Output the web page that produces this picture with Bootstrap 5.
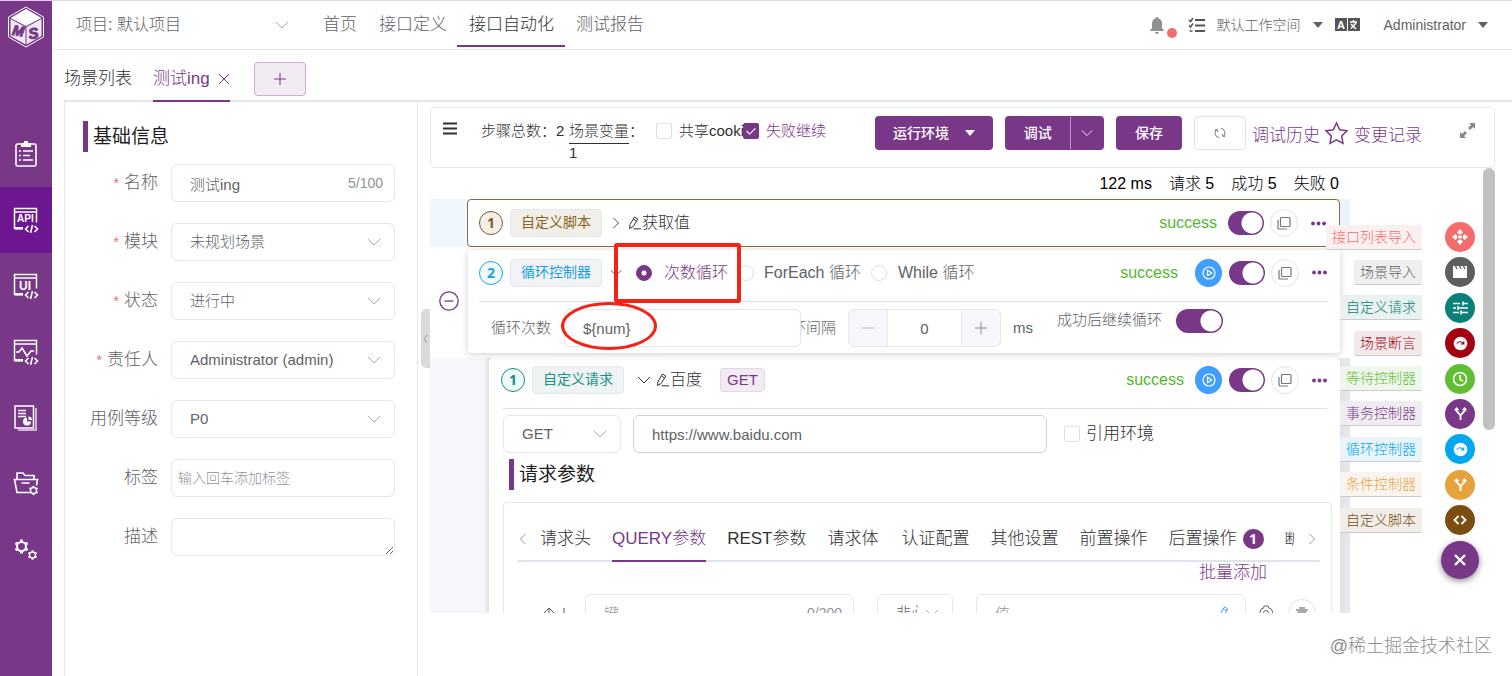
<!DOCTYPE html>
<html lang="zh-CN">
<head>
<meta charset="utf-8">
<meta name="viewport" content="width=device-width, initial-scale=1">
<title>接口自动化</title>
<link href="https://cdn.jsdelivr.net/npm/bootstrap@5.3.0/dist/css/bootstrap.min.css" rel="stylesheet">
<style>
:root{--ms:#783887;--line:#e4e7ed;--txt:#606266}
body{font-family:"Liberation Sans","Noto Sans CJK SC",sans-serif;font-weight:300;font-size:16px;line-height:24px;color:#303133;background:#fff;overflow-x:hidden}
button{font-weight:300}
svg{display:block;flex:none}
a{color:var(--ms);text-decoration:none}
.fs-17{font-size:17px}
.c-ms{color:var(--ms)}
.c-grey{color:var(--txt)}
.plain{background:none;border:0;padding:0;color:inherit}
/* side bar */
.side{width:52px;min-height:100vh;background:var(--ms);border-top:1px solid #e6c7ee}
.side .brand{height:120px;padding-top:5px}
.side a{height:66px;color:#fff}
.side a.active{background:#6c1690}
/* header */
.top{height:50px;border-top:1px solid #d9d9d9;border-bottom:1px solid #e6e6e6;color:var(--txt)}
.top .menu{gap:22px;margin-left:30px}
.top .menu a{color:var(--txt);height:46px;line-height:47px;position:relative}
.top .menu a.active{color:#303133}
.top .menu a.active::after{content:"";position:absolute;left:-12px;right:-11px;bottom:0;height:2px;background:var(--ms)}
.form-select.project{width:226px;border:0;color:var(--txt);padding:0 9px;background-position:right 4px top 8px;height:30px;line-height:30px;margin:9px 0 0 15px;font-size:16px}
.top-tools{height:47px}
.small-text{font-size:14px}
.caret{width:0;height:0;border:5px solid transparent;border-top:6px solid currentColor;border-bottom:0}
.dot{width:10px;height:10px;border-radius:50%;background:#f56c6c}
/* tabs of scenes */
.scenes{height:52px;margin-left:12px;border-bottom:2px solid #dfe4ed}
.scenes .tab-item{height:52px;line-height:24px;padding-top:7px;border-bottom:2px solid transparent}
.scenes .tab-item.active{color:var(--ms);border-color:var(--ms);margin-left:21px}
.add{width:52px;height:34px;border:1px solid #c9b0cf;border-radius:4px;background:#f2ebf3;color:var(--ms);place-items:center;margin:12px 0 0 24px;padding:0}
/* form */
.info{width:354px;margin-left:12px;border:1px solid var(--line);border-width:0 1px;padding:19px 22px 0 18px;min-height:calc(100vh - 102px)}
.headline{border-left:5px solid var(--ms);padding-left:5px;font-size:19px;font-weight:400;line-height:31px;color:#1d1d1f}
.info .headline{margin-bottom:12px}
.info .line{height:38px;margin-bottom:21px}
.info .line label{width:75px;text-align:right;margin-right:13px;color:var(--txt);font-size:17px;flex:none}
.req::before{content:"*";color:#f56c6c;font-size:14px;margin-right:5px}
.form-control,.form-select{font-weight:300;font-size:15px;line-height:24px;height:38px;border-color:#e4e7ed;color:var(--txt);padding:6px 18px}
.form-select{background-image:url("data:image/svg+xml,%3Csvg xmlns='http://www.w3.org/2000/svg' viewBox='0 0 14 14' fill='none' stroke='%23a8abb2' stroke-width='1'%3E%3Cpath d='M1 4l6 6 6-6'/%3E%3C/svg%3E");background-size:14px;background-position:right 13px center}
.form-control::placeholder{color:#909399}
.label-input{font-size:14px;padding:6px}
.count{position:absolute;right:12px;top:8px;font-size:14px;line-height:22px;color:#909399}
/* tool bar */
.bar{height:61px;margin:5px 17px 0 0;border:1px solid var(--line);border-radius:5px;padding:8px 18px 0 12px}
.bar .btn{height:34px;padding:0;font-size:14px;border-radius:4px}
.bar .btn-group .btn:first-child{border-radius:4px 0 0 4px}
.bar .btn-group .btn:last-child{border-radius:0 4px 4px 0}
.btn-ms{background:var(--ms);color:#fff;font-weight:500}
.btn-ms:hover{background:#8a4c98;color:#fff}
.form-check-input{border-color:#dcdfe6;margin:0;width:16px;height:16px;flex:none}
.form-check-input[type=checkbox]{border-radius:2px}
.form-check-input:checked{background-color:var(--ms);border-color:var(--ms)}
.form-check-input:checked[type=checkbox]{background-image:url("data:image/svg+xml,%3Csvg xmlns='http://www.w3.org/2000/svg' viewBox='0 0 16 16' fill='none' stroke='%23fff' stroke-width='1.3'%3E%3Cpath d='M3 8l3.500 3.500L13 5'/%3E%3C/svg%3E")}
.form-check-input:checked[type=radio]{background-image:radial-gradient(circle,#fff 2px,transparent 3px)}
.form-switch-ms{width:36px;height:24px;border-radius:12px;appearance:none;background:radial-gradient(circle at calc(100% - 12px) 50%,#fff 10px,var(--ms) 11px);flex:none;margin:0}
.form-switch-ms.wide{width:47px}
/* step tree */
.tree{height:calc(100vh - 262px);overflow:hidden;width:920px;background:#eef0f3}
.step{background:#fff;border-radius:4px}
.step-head{height:46px;padding-right:13px}
.row-a{background:linear-gradient(90deg,#f0f7ff,#eaf4ff);padding:0 10px 0 37px}
.row-a .step{border:1px solid #8a6b45;padding-left:11px}
.row-b{background:#fff;padding:3px 10px 5px 38px;position:relative}
.row-b .step{box-shadow:0 1px 7px #0003;padding-left:11px;height:103px}
.row-c{background:linear-gradient(90deg,#f5f7fb 54px,#e6e8eb 59px);padding:0 10px 0 59px}
.row-c .step{box-shadow:0 0 8px #0001;padding:0 8px 0 14px}
.num{width:24px;height:24px;border:1px solid;border-radius:50%;font:bold 14px/22px "Noto Sans",sans-serif;text-align:center;flex:none}
.tagbox{height:28px;padding:0 10px;font-size:14px;line-height:25px;border:1px solid #e4e7ed;border-radius:4px;background:#f2f3f5;margin-left:7px;flex:none;font-weight:400}
.ok{color:#52b82e;margin-right:11px}
.round{width:28px;height:28px;border-radius:50%;border:1px solid #e4e4e8;background:#fff;color:#777;display:grid;place-items:center;padding:0;flex:none}
.round.play{background:#409eff;border-color:#409eff;color:#fff;width:27px;margin-right:7px}
.round.copy{margin:0 13px 0 6px}
.rule{border-top:1px solid #dcdfe6;margin-right:13px}
.fold{position:absolute;left:9px;top:44px;width:20px;height:20px}
.mark-box{position:absolute;left:184px;top:-4px;width:127px;height:60px;border:4px solid #f52216;border-radius:3px}
.mark-oval{position:absolute;left:131px;top:55px;width:96px;height:48px;border:3px solid #f52216;border-radius:50%}
.stepper{width:153px;height:38px}
.stepper .btn{background:#f5f7fa;border:1px solid var(--line);width:40px;padding:0;color:#8a8d93;display:grid;place-items:center}
.inner{border:1px solid var(--line);border-radius:4px;padding:13px 11px 0 13px;height:180px}
.subtabs{gap:21px;border-bottom:2px solid #dfe4ed;font-size:17px;white-space:nowrap;height:46px}
.subtabs .plain{height:46px;line-height:46px;flex:none}
.subtabs .plain.active{color:var(--ms);border-bottom:2px solid var(--ms)}
.cnt{width:21px;height:20px;border-radius:10px;background:var(--ms);color:#fff;font:bold 14px/20px "Noto Sans",sans-serif;text-align:center;margin-left:6px}
.scroll{width:12px;height:262px;background:#c1c1c1;border-radius:6px;position:absolute;right:17px;top:66px}
/* quick actions over the tree */
.quick{position:absolute;right:33px;top:120px}
.quick ul{height:313px;margin:0 4px 6px 0;padding:0;list-style:none}
.quick li{gap:23px;height:30px;color:var(--c)}
.quick li span{font-size:14px;line-height:24px;height:25px;padding:0 6px;background:color-mix(in srgb,var(--c) 7%,#fafafa);border-bottom:1px solid #ccc;border-radius:2px;font-weight:300}
.quick li button{width:30px;height:30px;border:0;border-radius:50%;background:var(--c);color:#fff;padding:0;display:grid;place-items:center}
.close-all{width:38px;height:38px;border:0;border-radius:50%;background:var(--ms);color:#fff;display:grid;place-items:center;padding:0;box-shadow:0 2px 6px #0007}
.grip{position:absolute;left:-9px;top:207px;width:9px;height:59px;background:#d8dade;border-radius:5px 0 0 5px}
.stamp{position:absolute;right:20px;bottom:18px;font-size:18px;color:#8c8c8c;text-shadow:1px 1px 0 #fff}
.shrink{overflow:hidden;white-space:nowrap}
</style>
</head>
<body>
<svg width="0" height="0" class="position-absolute">
<defs>
<symbol id="down" viewBox="0 0 14 14"><path d="M1 4l6 6 6-6" fill="none" stroke="currentColor"/></symbol>
<symbol id="right" viewBox="0 0 14 14"><path d="M4 1l6 6-6 6" fill="none" stroke="currentColor"/></symbol>
<symbol id="left" viewBox="0 0 14 14"><path d="M10 1L4 7l6 6" fill="none" stroke="currentColor"/></symbol>
<symbol id="pen" viewBox="0 0 14 14"><path d="M1.500 12.500L2 8.500 6.500 1l3.300 2-4.600 7.500zM5.300 3l3.300 2M5.500 12.800H13" fill="none" stroke="currentColor"/></symbol>
<symbol id="copy" viewBox="0 0 14 14"><path d="M4.500 1.500h7.500a1 1 0 011 1v7a1 1 0 01-1 1H4.500a1 1 0 01-1-1v-7a1 1 0 011-1zM1 4v8a1 1 0 001 1h8" fill="none" stroke="currentColor" stroke-width="1.200"/></symbol>
<symbol id="play" viewBox="0 0 14 14"><circle cx="7" cy="7" r="6" fill="none" stroke="currentColor" stroke-width="1.200"/><path d="M5.500 4.300v5.400L9.800 7z" fill="none" stroke="currentColor" stroke-width="1.200"/></symbol>
<symbol id="dots" viewBox="0 0 15 5"><g fill="#783887"><circle cx="2" cy="2.500" r="1.900"/><circle cx="7.500" cy="2.500" r="1.900"/><circle cx="13" cy="2.500" r="1.900"/></g></symbol>
<symbol id="plus" viewBox="0 0 14 14"><path d="M7 1v12M1 7h12" fill="none" stroke="currentColor"/></symbol>
<symbol id="win" viewBox="0 0 26 26"><path d="M10 21.500H1.500V1.500h22v14M1.500 5h22" fill="none" stroke="currentColor" stroke-width="1.500"/><path d="M2 20h8v2.500H2z" fill="currentColor"/><path d="M15.500 19l-3 3 3 3M21.500 19l3 3-3 3M19.500 18l-2 8" fill="none" stroke="currentColor" stroke-width="1.600"/></symbol>
<symbol id="gear" viewBox="0 0 16 16"><circle cx="8" cy="8" r="4.800" fill="none" stroke="currentColor" stroke-width="2.200"/><g fill="none" stroke="currentColor" stroke-width="3"><path d="M8 .5v2M8 13.500v2M1.500 4.200l1.700 1M12.800 10.800l1.700 1M1.500 11.800l1.700-1M12.800 5.200l1.700-1"/></g></symbol>
<symbol id="fork" viewBox="0 0 16 16"><path d="M8 15V10L3.500 5V3M8 10l4.500-5V3" fill="none" stroke="currentColor" stroke-width="2"/><path d="M1 4.500L3.800 1l3 3.500zM9.500 4.500L12.300 1l3 3.500z" fill="currentColor"/></symbol>
<symbol id="loop" viewBox="0 0 16 16"><circle cx="8" cy="8" r="7.300" fill="currentColor"/><path d="M4 8c1.500-2.500 5-2.500 7 0M11.500 5.500v3H8.500" fill="none" stroke="var(--c)" stroke-width="1.200"/></symbol>
</defs>
</svg>
<div class="d-flex">
<nav class="side flex-shrink-0" aria-label="主菜单">
  <div class="brand d-flex justify-content-center">
    <svg width="38" height="42" viewBox="0 0 38 42"><path d="M19 1l17.500 10v20L19 41 1.500 31V11z" fill="none" stroke="#fff"/><path d="M19 3l15.500 9L19 20 3.500 12z" fill="#fff"/><path d="M3.500 13L18.500 21v17.500L3.500 30zM34.500 13L19.500 21v17.500L34.500 30z" fill="#f3e6f6"/><text x="5" y="29" font-size="14" font-weight="900" font-style="italic" fill="#783887" stroke="#783887" transform="rotate(9 6 28)">M</text><text x="22" y="33" font-size="15" font-weight="900" font-style="italic" fill="#783887" stroke="#783887" transform="rotate(-9 23 32)">S</text></svg>
  </div>
  <a href="#" aria-label="测试跟踪" class="d-flex align-items-center justify-content-center"><svg width="22" height="26" viewBox="0 0 22 26"><rect x="1" y="3" width="20" height="22" rx="1.500" fill="none" stroke="#fff" stroke-width="1.600"/><path d="M6 2h3V0h4v2h3v4H6z" fill="#fff"/><path d="M4 10h2M8 10h10M4 14.500h2M8 14.500h7M4 19h2M8 19h10" stroke="#fff" stroke-width="1.700"/></svg></a>
  <a href="#" aria-label="接口测试" class="active d-flex align-items-center justify-content-center"><svg width="26" height="27" viewBox="0 0 26 27"><use href="#win" width="26" height="26"/><text x="4" y="15" font-size="10" font-weight="bold" fill="#fff">API</text></svg></a>
  <a href="#" aria-label="UI 测试" class="d-flex align-items-center justify-content-center"><svg width="26" height="27" viewBox="0 0 26 27"><use href="#win" width="26" height="26"/><text x="6" y="17" font-size="12" font-weight="bold" fill="#fff">UI</text></svg></a>
  <a href="#" aria-label="性能测试" class="d-flex align-items-center justify-content-center"><svg width="26" height="27" viewBox="0 0 26 27"><use href="#win" width="26" height="26"/><path d="M3 13h3l3-4 5 8 4-5h3" fill="none" stroke="#fff" stroke-width="1.600"/></svg></a>
  <a href="#" aria-label="报告统计" class="d-flex align-items-center justify-content-center"><svg width="24" height="27" viewBox="0 0 24 27"><rect x="1" y="1" width="18.500" height="22" fill="none" stroke="#fff" stroke-width="1.500"/><path d="M22 3v22H4" fill="none" stroke="#d3aedb" stroke-width="2"/><path d="M4 5.500h8M4 8.500h8M4 11.500h8" stroke="#fff" stroke-width="1.400"/><path d="M13 12.500a4 4 0 104 4h-4z" fill="#fff"/><path d="M14.500 11.500v3.500h3.500a3.500 3.500 0 00-3.500-3.500z" fill="#fff"/></svg></a>
  <a href="#" aria-label="项目设置" class="d-flex align-items-center justify-content-center"><svg width="26" height="26" viewBox="0 0 26 26"><path d="M4 8V2h6l2 2.500h9V8M16 21.500H4L1.500 8.500h23l-1 6M8.500 12h8" fill="none" stroke="#fff" stroke-width="1.600"/><use href="#gear" x="15.500" y="14.500" width="10" height="10" color="#fff"/></svg></a>
  <a href="#" aria-label="系统设置" class="d-flex align-items-center justify-content-center"><svg width="26" height="22" viewBox="0 0 26 22"><use href="#gear" x="1" y="0" width="15" height="15" color="#fff"/><use href="#gear" x="14.500" y="11" width="10" height="10" color="#fff"/></svg></a>
</nav>

<div class="flex-grow-1 position-relative" style="min-width:0">
  <header class="top d-flex align-items-start">
    <select class="form-select project" aria-label="项目"><option>项目: 默认项目</option></select>
    <nav class="menu d-flex fs-17"><a href="#">首页</a><a href="#">接口定义</a><a href="#" class="active">接口自动化</a><a href="#">测试报告</a></nav>
    <div class="top-tools ms-auto d-flex align-items-center pe-4">
      <svg width="16" height="18" viewBox="0 0 16 18" fill="#8e9095"><path d="M8 1c1 0 1.300.6 1.300 1.300C12 3 13 5 13 8v4l2.300 3H.7L3 12V8c0-3 1-5 3.700-5.700C6.700 1.600 7 1 8 1zM6 16h4a2 2 0 01-4 0z"/></svg>
      <span class="dot mt-3" style="margin-left:2px"></span>
      <svg style="margin-left:11px" width="18" height="16" viewBox="0 0 18 16" fill="none" stroke="#555"><path d="M7 3h10M7 8.500h10M7 14h10" stroke-width="2"/><path d="M1 3l1.500 1.500L5 1M1 8.500L2.500 10 5 6.500M1.500 14h3" stroke-width="1.500"/></svg>
      <button class="plain small-text d-flex align-items-center gap-2" style="margin-left:11px">默认工作空间<span class="caret mx-1"></span></button>
      <svg class="ms-2" width="25" height="13" viewBox="0 0 25 13"><path d="M0 0h12v13H0zM13 0h12v13H13z" fill="#555"/><text x="2" y="10.500" font-size="11" font-weight="bold" fill="#fff">A</text><path d="M15 4h7M18.500 2v2M16 10.500L21 5M16 6l5 5" stroke="#fff" stroke-width="1.500"/></svg>
      <button class="plain small-text d-flex align-items-center gap-2 ms-4">Administrator<span class="caret ms-1"></span></button>
    </div>
  </header>

  <div class="scenes d-flex fs-17">
    <button class="plain tab-item d-flex align-items-center">场景列表</button>
    <button class="plain tab-item active d-flex align-items-center">测试ing<svg class="ms-2" width="12" height="12" viewBox="0 0 12 12" stroke="currentColor"><path d="M1 1l10 10M11 1L1 11"/></svg></button>
    <button class="add d-grid" aria-label="新增"><svg width="14" height="14"><use href="#plus"/></svg></button>
  </div>

  <div class="d-flex">
    <form class="info flex-shrink-0">
      <h2 class="headline">基础信息</h2>
      <div class="line d-flex align-items-center"><label for="n" class="req">名称</label><div class="position-relative flex-grow-1"><input id="n" class="form-control" value="测试ing"><span class="count">5/100</span></div></div>
      <div class="line d-flex align-items-center"><label for="m" class="req">模块</label><select id="m" class="form-select flex-grow-1 w-auto"><option>未规划场景</option></select></div>
      <div class="line d-flex align-items-center"><label for="s" class="req">状态</label><select id="s" class="form-select flex-grow-1 w-auto"><option>进行中</option></select></div>
      <div class="line d-flex align-items-center"><label for="o" class="req">责任人</label><select id="o" class="form-select flex-grow-1 w-auto"><option>Administrator (admin)</option></select></div>
      <div class="line d-flex align-items-center"><label for="p">用例等级</label><select id="p" class="form-select flex-grow-1 w-auto"><option>P0</option></select></div>
      <div class="line d-flex align-items-center"><label for="t">标签</label><input id="t" class="form-control label-input flex-grow-1 w-auto" size="1" placeholder="输入回车添加标签"></div>
      <div class="line d-flex align-items-center mb-0"><label for="d">描述</label><textarea id="d" class="form-control flex-grow-1 w-auto" cols="1" rows="1"></textarea></div>
    </form>

    <main class="flex-grow-1 position-relative" style="min-width:0;margin-left:12px">
      <button class="plain grip" aria-label="收起"><svg width="9" height="10" viewBox="0 0 9 10"><path d="M6 1L3 5l3 4" stroke="#999" fill="none"/></svg></button>
      <div class="bar d-flex align-items-start">
        <button class="plain" style="padding-top:6px" aria-label="菜单"><svg width="14" height="13" viewBox="0 0 14 13" stroke="#303133" stroke-width="2.200"><path d="M0 1.500h14M0 6.500h14M0 11.500h14"/></svg></button>
        <div class="d-flex align-items-start" style="font-size:15px;padding-top:3px">
          <span class="ms-4" style="width:88px">步骤总数：2</span>
          <div style="width:87px;line-height:18px"><a href="#" class="d-inline-block text-reset" style="border-bottom:1px solid #303133;line-height:24px">场景变量</a>：<br>1</div>
          <input class="form-check-input mt-1" type="checkbox" id="ck"><label for="ck" class="shrink" style="width:64px;margin-left:7px">共享cookie</label>
          <input class="form-check-input mt-1" type="checkbox" id="fk" checked><label for="fk" class="c-ms" style="margin-left:7px">失败继续</label>
        </div>
        <div class="ms-auto d-flex align-items-start">
          <button class="btn btn-ms d-flex align-items-center justify-content-center gap-3" style="width:118px">运行环境<span class="caret"></span></button>
          <div class="btn-group" style="width:99px;margin:0 12px"><button class="btn btn-ms" style="width:65px">调试</button><button class="btn btn-ms d-grid" style="place-items:center;width:34px;border-left:1px solid #b796bf" aria-label="更多"><svg width="12" height="12"><use href="#down"/></svg></button></div>
          <button class="btn btn-ms" style="width:66px">保存</button>
          <button class="btn border d-grid" style="width:52px;margin:0 6px 0 12px;place-items:center" aria-label="刷新"><svg width="12" height="12" viewBox="0 0 12 12" fill="none" stroke="#777"><path d="M5 10.800A5 5 0 012 3M1 2.700h2.300V5M7 1.200A5 5 0 0110 9M11 9.300H8.700V7"/></svg></button>
          <a href="#" class="fs-17" style="line-height:22px;margin-top:9px">调试历史</a>
          <svg style="margin:5px 5px 0 4px" width="25" height="24" viewBox="0 0 25 24"><path d="M12.500 2l3.200 6.800 7.300 1-5.300 5.200 1.300 7.300-6.500-3.500-6.500 3.500 1.300-7.300L2 9.800l7.300-1z" fill="none" stroke="#783887" stroke-width="1.500"/></svg>
          <a href="#" class="fs-17" style="line-height:22px;margin-top:9px">变更记录</a>
          <button class="plain" style="margin:6px 0 0 37px" aria-label="全屏"><svg width="17" height="17" viewBox="0 0 17 17" fill="#888"><path d="M10 1h6v6l-2-2-3 3-2-2 3-3zM7 16H1v-6l2 2 3-3 2 2-3 3z"/></svg></button>
        </div>
      </div>
      <div class="d-flex justify-content-end text-black" style="width:909px;height:31px;line-height:32px;gap:17px"><span>122 ms</span><span>请求 5</span><span>成功 5</span><span>失败 0</span></div>

      <div class="tree">
        <div class="row-a">
          <div class="step"><div class="step-head d-flex align-items-center">
            <span class="num" style="color:#7b5a2b;background:#f5efe6">1</span><span class="tagbox" style="color:#8a6420;background:#f2efeb">自定义脚本</span>
            <svg class="ms-2" width="12" height="12"><use href="#right"/></svg><svg style="margin-left:6px" width="14" height="14"><use href="#pen"/></svg><span>获取值</span>
            <span class="ok ms-auto">success</span><input type="checkbox" checked class="form-switch-ms" aria-label="启用"><button class="round copy" aria-label="复制"><svg width="14" height="14"><use href="#copy"/></svg></button><button class="plain" aria-label="更多"><svg width="15" height="5"><use href="#dots"/></svg></button>
          </div></div>
        </div>
        <div class="row-b">
          <button class="plain fold" aria-label="折叠"><svg width="20" height="20" viewBox="0 0 20 20" fill="none" stroke="#783887" stroke-width="1.300"><circle cx="10" cy="10" r="9.200"/><path d="M5.500 10h9"/></svg></button>
          <div class="step"><div class="step-head d-flex align-items-center" style="height:51px;padding-bottom:6px">
            <span class="num" style="color:#1aa0e6;background:#f0faff">2</span><span class="tagbox" style="color:#1aa0e6">循环控制器</span>
            <svg class="mx-2" width="12" height="12"><use href="#down"/></svg>
            <input class="form-check-input" type="radio" name="loop" id="r1" checked style="margin-left:6px"><label for="r1" class="c-ms" style="width:79px;padding-left:12px">次数循环</label>
            <input class="form-check-input" type="radio" name="loop" id="r2" style="margin-left:7px"><label for="r2" class="c-grey" style="padding-left:10px;width:117px">ForEach 循环</label>
            <input class="form-check-input" type="radio" name="loop" id="r3"><label for="r3" class="c-grey" style="padding-left:11px">While 循环</label>
            <span class="ok ms-auto" style="margin-right:17px">success</span><button class="round play" aria-label="运行"><svg width="14" height="14"><use href="#play"/></svg></button><input type="checkbox" checked class="form-switch-ms" aria-label="启用"><button class="round copy" aria-label="复制"><svg width="14" height="14"><use href="#copy"/></svg></button><button class="plain" aria-label="更多"><svg width="15" height="5"><use href="#dots"/></svg></button>
          </div>
          <div class="rule"></div>
          <div class="d-flex align-items-center c-grey" style="padding:6px 0 0 12px;font-size:15px">
            <label for="lc" style="width:73px">循环次数</label><input id="lc" class="form-control" style="width:237px" value="${num}">
            <span class="shrink d-flex justify-content-end" style="width:35px;margin-right:12px"><span>循环间隔</span></span>
            <div class="input-group stepper flex-nowrap"><button class="btn" aria-label="减"><svg width="14" height="14"><path d="M1 7h12" stroke="#bbb"/></svg></button><input class="form-control text-center px-1" value="0" aria-label="间隔"><button class="btn" aria-label="加"><svg width="14" height="14"><use href="#plus"/></svg></button></div>
            <span style="margin:0 24px 0 12px">ms</span><label for="go" class="pb-3">成功后继续循环</label><input id="go" type="checkbox" checked class="form-switch-ms wide" style="margin:0 0 14px 14px">
          </div></div>
          <div class="mark-box"></div><div class="mark-oval"></div>
        </div>
        <div class="row-c">
          <div class="step"><div class="step-head d-flex align-items-center" style="height:50px;padding:0 5px 6px 0;margin-left:-2px">
            <span class="num" style="color:#1a8a80;background:#eefaf8">1</span><span class="tagbox" style="color:#1a9186;background:#eef3f4">自定义请求</span>
            <svg style="margin:0 5px 0 13px" width="14" height="14"><use href="#down"/></svg><svg width="14" height="14"><use href="#pen"/></svg><span>百度</span>
            <span class="tagbox c-ms" style="height:24px;line-height:22px;padding:0 6px;font-size:15px;margin-left:18px;background:#f2ebf3;border-color:#e4d7e7">GET</span>
            <span class="ok ms-auto">success</span><button class="round play" aria-label="运行"><svg width="14" height="14"><use href="#play"/></svg></button><input type="checkbox" checked class="form-switch-ms" aria-label="启用"><button class="round copy" aria-label="复制"><svg width="14" height="14"><use href="#copy"/></svg></button><button class="plain" aria-label="更多"><svg width="15" height="5"><use href="#dots"/></svg></button>
          </div>
          <div class="rule" style="margin-right:5px"></div>
          <div class="d-flex align-items-center" style="padding-top:6px">
            <select class="form-select" style="width:118px" aria-label="方法"><option>GET</option></select>
            <input class="form-control" style="width:414px;margin:0 17px 0 12px;border-color:#cfd2d8" value="https://www.baidu.com" aria-label="URL">
            <input class="form-check-input" type="checkbox" id="env"><label for="env" class="fs-17" style="margin-left:6px">引用环境</label>
          </div>
          <h3 class="headline" style="margin:6px 0 12px 6px">请求参数</h3>
          <div class="inner">
            <div class="subtabs d-flex"><button class="plain" aria-label="向左"><svg width="12" height="12" color="#888"><use href="#left"/></svg></button>
              <button class="plain" style="margin-left:-10px">请求头</button><button class="plain active">QUERY参数</button><button class="plain">REST参数</button><button class="plain">请求体</button><button class="plain" style="margin-left:2px">认证配置</button><button class="plain">其他设置</button><button class="plain">前置操作</button><button class="plain d-flex align-items-center">后置操作<span class="cnt">1</span></button><button class="plain shrink text-start" style="width:9px;font-size:15px">断言规则</button><button class="plain" aria-label="向右" style="margin-left:-9px"><svg width="12" height="12" color="#888"><use href="#right"/></svg></button></div>
            <div class="text-end" style="height:32px;line-height:22px;padding-right:53px"><a href="#" class="fs-17">批量添加</a></div>
            <div class="d-flex align-items-center">
              <svg width="26" height="14" viewBox="0 0 26 14" fill="none" stroke="#555" style="margin:0 16px 0 26px"><path d="M6 14V2M1 7l5-5 5 5M21 2v11M16 8l5 5 5-5"/></svg>
              <div class="position-relative"><input class="form-control" style="width:269px" placeholder="键" aria-label="键"><span class="count">0/200</span></div>
              <select class="form-select" style="width:76px;margin:0 23px;padding-right:34px" aria-label="必填"><option>非必填</option></select>
              <div class="position-relative"><input class="form-control" style="width:270px" placeholder="值" aria-label="值"><svg class="position-absolute top-0 end-0" style="margin:12px 14px" width="14" height="14" color="#409eff"><use href="#pen"/></svg></div>
              <svg width="16" height="16" style="margin:0 14px 0 12px" color="#666" viewBox="0 0 16 16" fill="none" stroke="currentColor"><circle cx="8" cy="8" r="2.500"/><path d="M6 1h4l.8 2 2.200.8 1.800 3.200-1.200 1.500-.8 3-2.500.8L10 15H6l-.8-2-2.200-.8L1 9l1.200-2 .8-3 2.500-.8z"/></svg>
              <button class="round" aria-label="删除"><svg width="14" height="14" viewBox="0 0 14 14" fill="#aaa"><path d="M1 3h12v2H1zM4 1h6v2H4zM2.500 5h9v8h-9z"/></svg></button>
            </div>
          </div></div>
        </div>
      </div>

      <div class="scroll"></div>
      <div class="quick d-flex flex-column align-items-end">
        <ul class="d-flex flex-column justify-content-between">
          <li class="d-flex align-items-center justify-content-end" style="--c:#f56c6c"><span>接口列表导入</span><button aria-label="接口列表导入"><svg width="16" height="16" viewBox="0 0 16 16" fill="#fff"><path d="M8 0l3 3.500-2 1.700H7L5 3.500zM8 16l3-3.500-2-1.700H7l-2 1.700zM0 8l3.500-3 1.700 2v2l-1.700 2zM16 8l-3.500-3-1.700 2v2l1.700 2z"/><circle cx="8" cy="8" r="1.800"/></svg></button></li>
          <li class="d-flex align-items-center justify-content-end" style="--c:#5c5e62"><span>场景导入</span><button aria-label="场景导入"><svg width="16" height="14" viewBox="0 0 16 14"><path d="M1 1h14v12H1z" fill="#fff"/><path d="M3 0l2 4M7 0l2 4M11 0l2 4" stroke="#5c5e62" stroke-width="1.300"/></svg></button></li>
          <li class="d-flex align-items-center justify-content-end" style="--c:#0b8078"><span>自定义请求</span><button aria-label="自定义请求"><svg width="15" height="14" viewBox="0 0 15 14" stroke="#fff" stroke-width="1.600"><path d="M0 2.500h7M10 2.500h5M10 .5v4M0 7h3M6 7h9M5 5v4M0 11.500h6M9 11.500h6M8 9.500v4"/></svg></button></li>
          <li class="d-flex align-items-center justify-content-end" style="--c:#a30014"><span>场景断言</span><button aria-label="场景断言"><svg width="15" height="15"><use href="#loop"/></svg></button></li>
          <li class="d-flex align-items-center justify-content-end" style="--c:#61bd31"><span>等待控制器</span><button aria-label="等待控制器"><svg width="16" height="16" viewBox="0 0 16 16" fill="none" stroke="#fff" stroke-width="1.500"><circle cx="8" cy="8" r="6.500"/><path d="M8 4v4.500l3 1.500"/></svg></button></li>
          <li class="d-flex align-items-center justify-content-end" style="--c:#783887"><span>事务控制器</span><button aria-label="事务控制器"><svg width="15" height="15"><use href="#fork"/></svg></button></li>
          <li class="d-flex align-items-center justify-content-end" style="--c:#02a7f0"><span>循环控制器</span><button aria-label="循环控制器"><svg width="15" height="15"><use href="#loop"/></svg></button></li>
          <li class="d-flex align-items-center justify-content-end" style="--c:#e6a23c"><span>条件控制器</span><button aria-label="条件控制器"><svg width="15" height="15"><use href="#fork"/></svg></button></li>
          <li class="d-flex align-items-center justify-content-end" style="--c:#7b4d12"><span>自定义脚本</span><button aria-label="自定义脚本"><svg width="14" height="10" viewBox="0 0 14 10" fill="none" stroke="#fff" stroke-width="1.800"><path d="M5.500 1l-4 4 4 4M8.500 1l4 4-4 4"/></svg></button></li>
        </ul>
        <button class="close-all" aria-label="关闭"><svg width="12" height="12" viewBox="0 0 12 12" stroke="#fff" stroke-width="2.400"><path d="M1 1l10 10M11 1L1 11"/></svg></button>
      </div>
    </main>
  </div>
  <div class="stamp">@稀土掘金技术社区</div>
</div>
</div>
<script src="https://cdn.jsdelivr.net/npm/bootstrap@5.3.0/dist/js/bootstrap.bundle.min.js"></script>
</body>
</html>
